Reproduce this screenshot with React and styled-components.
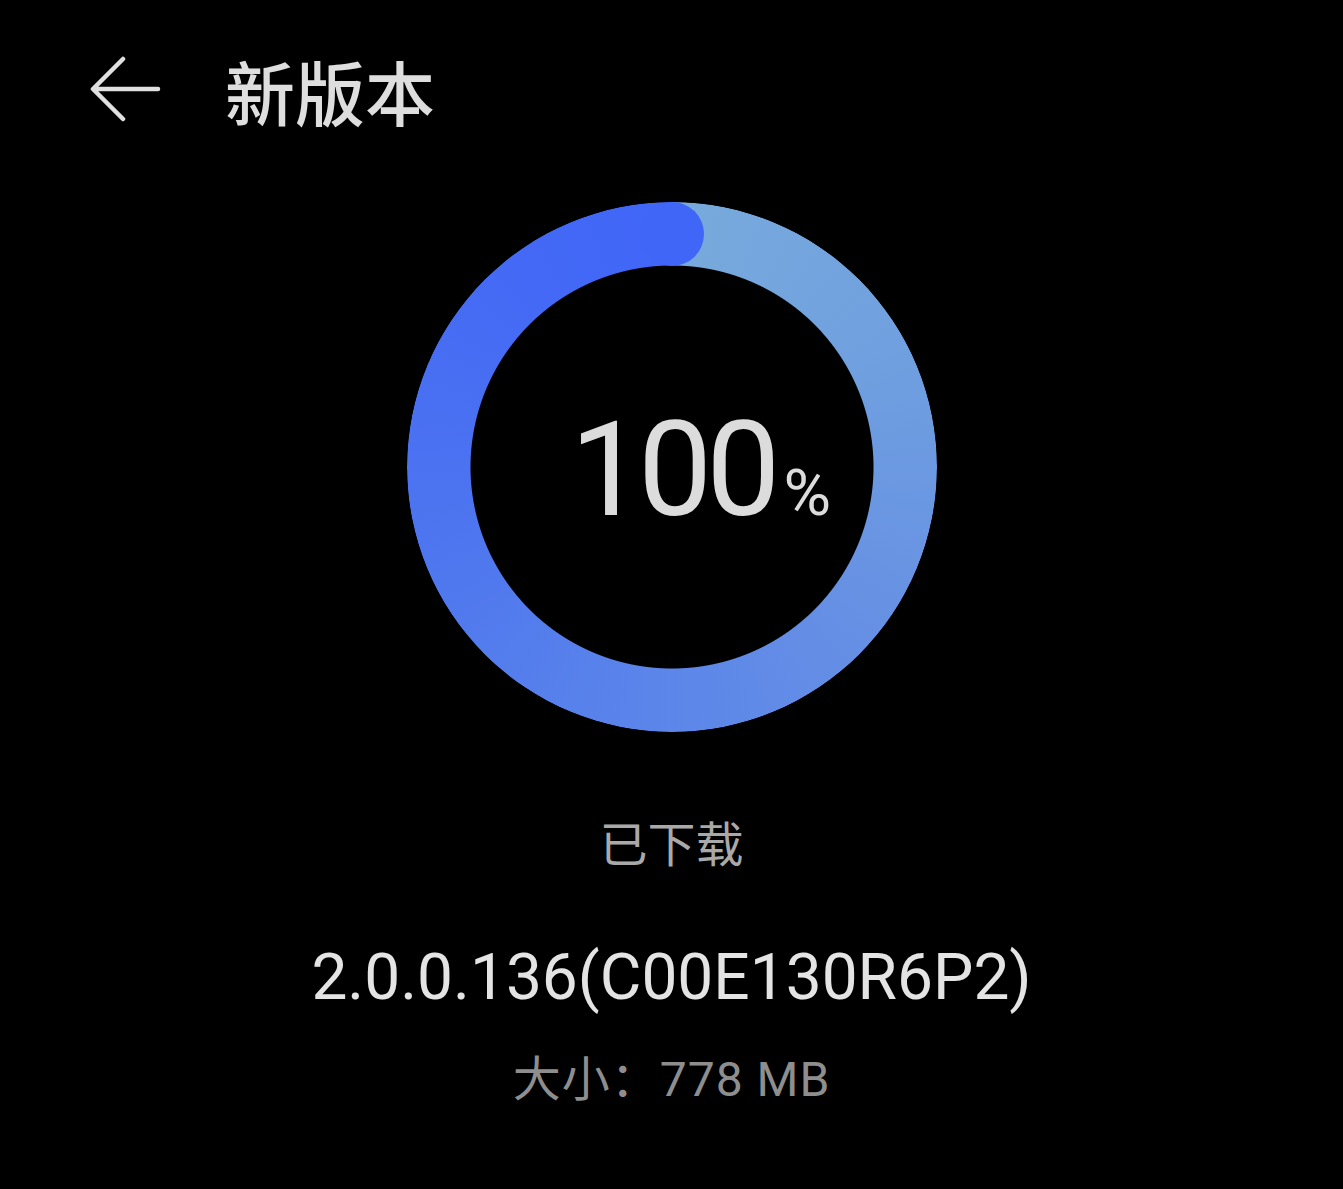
import React from 'react'
import styled, { createGlobalStyle } from 'styled-components'

const GlobalStyle = createGlobalStyle`
  html, body {
    margin: 0;
    padding: 0;
    background: #000;
  }
  body {
    font-family: Roboto, "Noto Sans CJK SC", sans-serif;
    color: #e0e0e0;
  }
`

const Page = styled.div`
  width: 1343px;
  min-height: 1189px;
  background: #000;
  display: flex;
  flex-direction: column;
  align-items: stretch;
`

const Header = styled.header`
  display: flex;
  align-items: center;
  height: 90px;
  padding: 46px 0 0 88px;
`

const BackButton = styled.button`
  display: flex;
  align-items: center;
  justify-content: center;
  width: 74px;
  height: 70px;
  padding: 0;
  border: none;
  background: none;
  cursor: pointer;
`

const Title = styled.h1`
  margin: 0 0 0 63px;
  font-family: "Noto Sans CJK SC", sans-serif;
  font-size: 70px;
  font-weight: 500;
  line-height: 90px;
  color: #dedede;
`

const Body = styled.main`
  display: flex;
  flex-direction: column;
  align-items: center;
`

const Ring = styled.div`
  position: relative;
  width: ${p => p.size}px;
  height: ${p => p.size}px;
  margin-top: 66px;
  display: flex;
  align-items: center;
  justify-content: center;
`

const Track = styled.div`
  position: absolute;
  inset: 0;
  border-radius: 50%;
  background: conic-gradient(
    from 0deg,
    #78aadc 0deg,
    #70a0df 60deg,
    #6690e4 130deg,
    #5a84ea 190deg,
    #4e76ef 250deg,
    #4469f5 320deg,
    #4066f8 360deg
  );
  mask: radial-gradient(circle, transparent ${p => p.inner}px, #000 ${p => p.inner + 1}px);
  -webkit-mask: radial-gradient(circle, transparent ${p => p.inner}px, #000 ${p => p.inner + 1}px);
`

const Cap = styled.div`
  position: absolute;
  top: 0;
  left: 50%;
  width: ${p => p.thickness}px;
  height: ${p => p.thickness}px;
  margin-left: -${p => p.thickness / 2}px;
  border-radius: 50%;
  background: #4066f8;
`

const Value = styled.div`
  position: relative;
  display: flex;
  align-items: baseline;
  padding-left: 58px;
  margin-top: 6px;
  color: #dcdcdc;
  font-family: Roboto, sans-serif;
`

const Number = styled.span`
  font-size: 132px;
  line-height: 1;
  letter-spacing: -6px;
`

const Percent = styled.span`
  font-size: 65px;
  line-height: 1;
  margin-left: 9px;
`

const Status = styled.div`
  margin-top: 79px;
  font-family: "Noto Sans CJK SC", sans-serif;
  font-size: 48px;
  line-height: 60px;
  color: #a9a9a9;
`

const Version = styled.div`
  margin-top: 67px;
  font-family: Roboto, "Noto Sans CJK SC", sans-serif;
  font-size: 64px;
  line-height: 80px;
  color: #e4e4e4;
`

const Size = styled.div`
  margin-top: 32px;
  font-family: Roboto, "Noto Sans CJK SC", sans-serif;
  font-size: 48px;
  line-height: 60px;
  letter-spacing: 1px;
  color: #8e8e8e;
`

const BackArrow = () => (
  <svg width="74" height="70" viewBox="0 0 74 70" fill="none">
    <path
      d="M70 33H6M35 3L5 33L35 63"
      stroke="#e0e0e0"
      strokeWidth="4.5"
      strokeLinecap="round"
      strokeLinejoin="round"
    />
  </svg>
)

const ProgressRing = ({ percent }) => {
  const size = 530
  const thickness = 64
  return (
    <Ring size={size}>
      <Track inner={size / 2 - thickness} />
      <Cap thickness={thickness} />
      <Value>
        <Number>{percent}</Number>
        <Percent>%</Percent>
      </Value>
    </Ring>
  )
}

const App = () => (
  <>
    <GlobalStyle />
    <Page>
      <Header>
        <BackButton aria-label="返回">
          <BackArrow />
        </BackButton>
        <Title>新版本</Title>
      </Header>
      <Body>
        <ProgressRing percent={100} />
        <Status>已下载</Status>
        <Version>2.0.0.136(C00E130R6P2)</Version>
        <Size>大小：778 MB</Size>
      </Body>
    </Page>
  </>
)

export default App
